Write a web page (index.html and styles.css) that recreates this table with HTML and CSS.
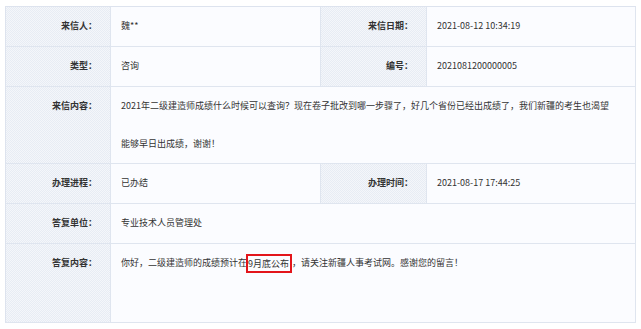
FILE: index.html
```html
<!DOCTYPE html>
<html lang="zh-CN">
<head>
<meta charset="utf-8">
<title>留言详情</title>
<link rel="stylesheet" href="styles.css">
</head>
<body>
<div class="detail">
  <div class="label">来信人：</div>
  <div class="value">魏**</div>
  <div class="label">来信日期：</div>
  <div class="value">2021-08-12 10:34:19</div>

  <div class="label">类型：</div>
  <div class="value">咨询</div>
  <div class="label">编号：</div>
  <div class="value">2021081200000005</div>

  <div class="label">来信内容：</div>
  <div class="value wide long">2021年二级建造师成绩什么时候可以查询？现在卷子批改到哪一步骤了，好几个省份已经出成绩了，我们新疆的考生也渴望能够早日出成绩，谢谢！</div>

  <div class="label">办理进程：</div>
  <div class="value">已办结</div>
  <div class="label">办理时间：</div>
  <div class="value">2021-08-17 17:44:25</div>

  <div class="label">答复单位：</div>
  <div class="value wide">专业技术人员管理处</div>

  <div class="label tall">答复内容：</div>
  <div class="value wide long tall">你好，二级建造师的成绩预计在<span class="mark">9月底公布</span>，请关注新疆人事考试网。感谢您的留言！</div>
</div>
</body>
</html>
```

FILE: styles.css
```css
html, body {
  margin: 0;
  padding: 0;
  background: #ffffff;
}

body {
  padding: 6px 0 0 5px;
  font-family: "Noto Sans CJK SC", "Microsoft YaHei", sans-serif;
  font-size: 9px;
  color: #333333;
}

.detail {
  display: grid;
  grid-template-columns: 105px 210px 106px 209px;
  width: 631px;
  box-sizing: border-box;
  border-top: 1px solid #dde3ee;
  border-left: 1px solid #dde3ee;
}

.label,
.value {
  min-height: 39px;
  line-height: 38px;
  border-right: 1px solid #dfe5ef;
  border-bottom: 1px solid #dfe5ef;
  box-sizing: content-box;
}

.label {
  text-align: right;
  font-weight: bold;
  color: #333333;
  padding-right: 13px;
  background-color: #eef2f8;
  background-image: repeating-conic-gradient(#e7ecf4 0 25%, #f4f6fa 0 50%);
  background-size: 2px 2px;
}

.value {
  text-align: left;
  padding-left: 10px;
  background: #fbfcff;
}

.wide {
  grid-column: span 3;
}

.long {
  padding-right: 24px;
}

.tall {
  min-height: 78px;
}

.mark {
  display: inline-block;
  line-height: 15px;
  border: 2px solid #e3151b;
  padding: 0 1px 0 0;
  margin-left: -1px;
  vertical-align: middle;
  position: relative;
  top: 0;
}
```
